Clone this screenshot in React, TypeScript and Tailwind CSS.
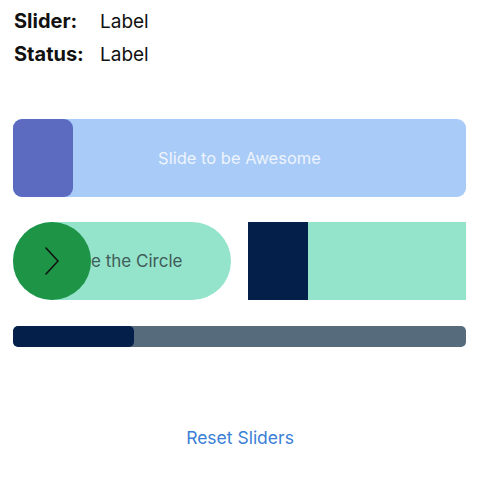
import React from 'react';

const font = { fontFamily: 'Inter, "Noto Sans", sans-serif' };

function InfoRow({ name, value }: { name: string; value: string }) {
  return (
    <div className="flex h-[33px] items-baseline text-[19px] leading-[33px] text-[#111]">
      <span className="w-[86px] text-[20px] font-bold">{name}</span>
      <span>{value}</span>
    </div>
  );
}

function ChevronRight() {
  return (
    <svg width="16" height="30" viewBox="0 0 16 30" fill="none">
      <path d="M2 2 L14 15 L2 28" stroke="#111" strokeWidth="1.6" strokeLinecap="round" strokeLinejoin="round" />
    </svg>
  );
}

export default function App() {
  return (
    <div className="h-[484px] w-[480px] bg-white" style={font}>
      <div className="pl-[14px] pt-[5px]">
        <InfoRow name="Slider:" value="Label" />
        <InfoRow name="Status:" value="Label" />
      </div>

      <div className="ml-[13px] mr-[14px] mt-[48px] flex flex-col">
        {/* blue slide-to bar */}
        <div className="relative flex h-[78px] items-center justify-center rounded-[9px] bg-[#a8cbf7]">
          <span className="text-[16.5px] text-[#eef4fd]">Slide to be Awesome</span>
          <div className="absolute left-0 top-0 h-[78px] w-[60px] rounded-[9px] bg-[#5c6bc0]" />
        </div>

        <div className="mt-[25px] grid grid-cols-2 gap-[17px]">
          {/* circle slider */}
          <div className="relative flex h-[78px] items-center justify-center rounded-full bg-[#94e3cb]">
            <span className="pt-[2px] text-[17px] text-[#3f5d58]">Slide the Circle</span>
            <div className="absolute left-0 top-0 flex h-[78px] w-[78px] items-center justify-center rounded-full bg-[#1e9447]">
              <ChevronRight />
            </div>
          </div>
          {/* square slider */}
          <div className="flex h-[78px] bg-[#94e3cb]">
            <div className="h-full w-[60px] bg-[#04204a]" />
          </div>
        </div>

        {/* progress */}
        <div className="mt-[26px] h-[21px] overflow-hidden rounded-[5px] bg-[#566c7c]">
          <div className="h-full w-[121px] rounded-[5px] bg-[#04204a]" />
        </div>
      </div>

      <div className="mt-[78px] flex justify-center">
        <button className="text-[17.5px] text-[#3a7fd5]">Reset Sliders</button>
      </div>
    </div>
  );
}
